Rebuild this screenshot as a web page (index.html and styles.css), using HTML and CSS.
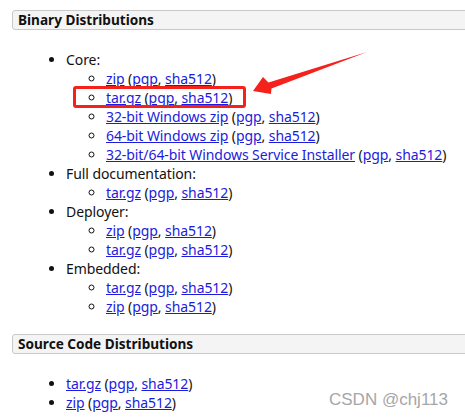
FILE: index.html
```html
<!DOCTYPE html>
<html>
<head>
<meta charset="utf-8">
<link rel="stylesheet" href="styles.css">
</head>
<body>
<div class="page">
  <h3 class="section-title">Binary Distributions</h3>
  <ul class="list">
    <li>Core:
      <ul class="sub">
        <li><a href="#">zip</a> (<a href="#">pgp</a>, <a href="#">sha512</a>)</li>
        <li><a href="#">tar.gz</a> (<a href="#">pgp</a>, <a href="#">sha512</a>)</li>
        <li><a href="#">32-bit Windows zip</a> (<a href="#">pgp</a>, <a href="#">sha512</a>)</li>
        <li><a href="#">64-bit Windows zip</a> (<a href="#">pgp</a>, <a href="#">sha512</a>)</li>
        <li><a href="#">32-bit/64-bit Windows Service Installer</a> (<a href="#">pgp</a>, <a href="#">sha512</a>)</li>
      </ul>
    </li>
    <li>Full documentation:
      <ul class="sub">
        <li><a href="#">tar.gz</a> (<a href="#">pgp</a>, <a href="#">sha512</a>)</li>
      </ul>
    </li>
    <li>Deployer:
      <ul class="sub">
        <li><a href="#">zip</a> (<a href="#">pgp</a>, <a href="#">sha512</a>)</li>
        <li><a href="#">tar.gz</a> (<a href="#">pgp</a>, <a href="#">sha512</a>)</li>
      </ul>
    </li>
    <li>Embedded:
      <ul class="sub">
        <li><a href="#">tar.gz</a> (<a href="#">pgp</a>, <a href="#">sha512</a>)</li>
        <li><a href="#">zip</a> (<a href="#">pgp</a>, <a href="#">sha512</a>)</li>
      </ul>
    </li>
  </ul>
  <h3 class="section-title">Source Code Distributions</h3>
  <ul class="list">
    <li><a href="#">tar.gz</a> (<a href="#">pgp</a>, <a href="#">sha512</a>)</li>
    <li><a href="#">zip</a> (<a href="#">pgp</a>, <a href="#">sha512</a>)</li>
  </ul>
</div>
<div class="highlight"></div>
<svg class="arrow" width="465" height="420" viewBox="0 0 465 420">
  <polygon points="253,91 263,77 268.5,82.5 367,52 271.5,88.5 271,94" fill="#f5211b"/>
</svg>
<div class="watermark">CSDN @chj113</div>
</body>
</html>
```
FILE: styles.css
```css
html, body {
  margin: 0;
  padding: 0;
  background: #ffffff;
  overflow: hidden;
}
body {
  width: 465px;
  height: 420px;
  position: relative;
  font-family: "Noto Sans", "Open Sans", sans-serif;
  font-size: 14px;
  letter-spacing: -0.08px;
  color: #111111;
}
.page {
  padding: 10px 0 0 12px;
}
.section-title {
  margin: 0 -20px 0 0;
  height: 18px;
  line-height: 18px;
  padding: 0 0 0 5px;
  border: 1px solid #c8c8c8;
  border-radius: 3px;
  background: #f4f4f4;
  font-size: 13.6px;
  letter-spacing: 0;
  font-weight: bold;
  color: #111;
}
.list {
  margin: 20px 0 18px 0;
  padding: 0 0 0 54px;
  list-style: disc;
}
.list li {
  line-height: 19px;
}
.sub {
  margin: 0;
  padding: 0 0 0 40px;
  list-style: circle;
}
a {
  color: #1c1cdc;
  text-decoration: underline;
}
.highlight {
  position: absolute;
  left: 73px;
  top: 86px;
  width: 167px;
  height: 16px;
  border: 3px solid #f5211b;
  border-radius: 3px;
}
.arrow {
  position: absolute;
  left: 0;
  top: 0;
}
.watermark {
  position: absolute;
  left: 329px;
  top: 390px;
  font-family: "Liberation Sans", Arial, sans-serif;
  font-size: 17px;
  letter-spacing: 0;
  color: #a6a6a6;
  text-shadow: 0 0 2px #fff;
}
```
